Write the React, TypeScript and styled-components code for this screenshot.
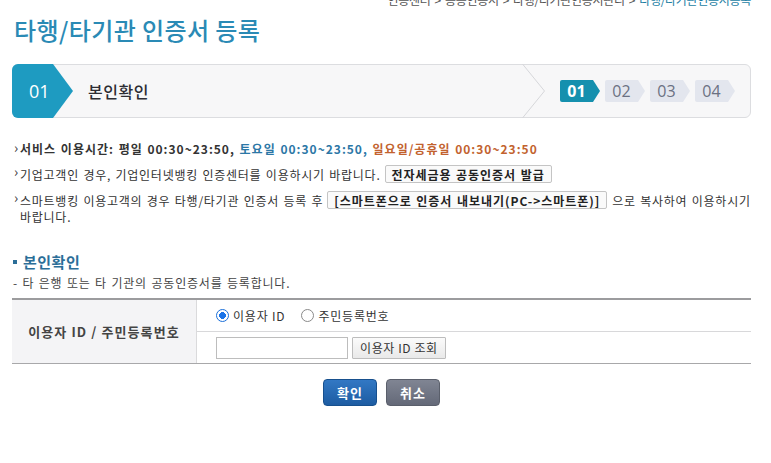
import React from 'react'
import styled, { createGlobalStyle } from 'styled-components'

const GlobalStyle = createGlobalStyle`
    html, body {
        margin: 0;
        padding: 0;
        background: #ffffff;
        overflow: hidden;
    }
    body {
        font-family: "Noto Sans CJK KR", "Noto Sans", sans-serif;
        color: #333333;
        font-size: 12px;
    }
`

const Page = styled.div`
    width: 739px;
    padding: 0 20px 0 12px;
`

const Breadcrumb = styled.div`
    display: flex;
    justify-content: flex-end;
    gap: 4px;
    margin-top: -7px;
    height: 14px;
    font-size: 12px;
    line-height: 14px;
    color: #555555;
    letter-spacing: -0.3px;
`

const Crumb = styled.span<{ $current?: boolean }>`
    color: ${({ $current }) => ($current ? '#1b7ea3' : '#555555')};
`

const Title = styled.h1`
    margin: 8px 0 0 2px;
    font-size: 24px;
    font-weight: 500;
    line-height: 30px;
    color: #2a8ab5;
    letter-spacing: 0.4px;
`

const StepBar = styled.div`
    display: flex;
    align-items: stretch;
    height: 54px;
    margin-top: 19px;
    border: 1px solid #dcdde0;
    border-radius: 6px;
    background: #f7f7f8;
    box-sizing: border-box;
    overflow: visible;
`

const StepBadge = styled.div`
    width: 72px;
    margin: -1px 0 -1px -1px;
    background: #1e9bc1;
    border-radius: 6px 0 0 6px;
    clip-path: polygon(0 0, 41px 0, 61px 50%, 41px 100%, 0 100%);
    color: #ffffff;
    font-family: "Open Sans", "Noto Sans", sans-serif;
    font-size: 18px;
    display: flex;
    align-items: center;
    padding-left: 17px;
    box-sizing: border-box;
`

const StepTitle = styled.div`
    flex: 1;
    display: flex;
    align-items: center;
    padding-left: 4px;
    font-size: 16px;
    font-weight: 500;
    color: #2d2d33;
    letter-spacing: 0.5px;
`

const Chevron = styled.svg`
    width: 24px;
    height: 54px;
    margin-top: -1px;
    flex: none;
`

const Pills = styled.div`
    display: flex;
    align-items: center;
    gap: 5px;
    padding: 0 15px 0 14px;
`

const Pill = styled.div<{ $active?: boolean }>`
    width: 40px;
    height: 22px;
    background: ${({ $active }) => ($active ? '#1590ae' : '#e3e6ee')};
    color: ${({ $active }) => ($active ? '#ffffff' : '#6b7182')};
    font-weight: ${({ $active }) => ($active ? 700 : 400)};
    clip-path: polygon(0 0, 33px 0, 40px 50%, 33px 100%, 0 100%);
    border-radius: 2px 0 0 2px;
    font-family: "Open Sans", "Noto Sans", sans-serif;
    font-size: 16px;
    line-height: 22px;
    padding-right: 7px;
    box-sizing: border-box;
    text-align: center;
`

const Notices = styled.ul`
    list-style: none;
    margin: 23px 0 0 0;
    padding: 0;
`

const Notice = styled.li`
    position: relative;
    padding-left: 8px;
    margin-bottom: 8px;
    line-height: 16px;
    font-size: 12px;
    color: #333333;
    letter-spacing: 0.75px;
    word-spacing: 1px;
    &::before {
        content: '›';
        position: absolute;
        left: 2px;
        top: -2px;
        font-size: 14px;
        font-weight: 400;
        color: #333333;
    }
`

const Line = styled.span`
    white-space: nowrap;
`

const Strong = styled.b<{ $tone?: 'blue' | 'orange' }>`
    font-weight: 700;
    letter-spacing: 1px;
    color: ${({ $tone }) =>
        $tone === 'blue' ? '#2c77a6' : $tone === 'orange' ? '#c2622e' : '#333333'};
`

const Tag = styled.span`
    display: inline-block;
    margin: 0 5px 0 4px;
    padding: 0 6px;
    height: 18px;
    line-height: 17px;
    border: 1px solid #c4c4c4;
    border-radius: 2px;
    background: #fafafa;
    font-weight: 700;
    color: #222222;
    box-sizing: border-box;
    letter-spacing: 0.95px;
`

const SectionTitle = styled.h2`
    display: flex;
    align-items: center;
    gap: 6px;
    margin: 27px 0 0 1px;
    font-size: 15px;
    line-height: 20px;
    font-weight: 700;
    color: #2b6e98;
    letter-spacing: 0.5px;
    &::before {
        content: '';
        width: 4px;
        height: 4px;
        background: #2b6e98;
    }
`

const SectionDesc = styled.p`
    margin: 2px 0 0 1px;
    font-size: 12px;
    line-height: 18px;
    color: #444444;
    letter-spacing: 0.8px;
    word-spacing: 1px;
`

const Table = styled.div`
    display: grid;
    grid-template-columns: 185px 1fr;
    margin-top: 6px;
    border-top: 2px solid #9c9c9e;
    border-bottom: 1px solid #a8a8aa;
`

const HeadCell = styled.div`
    display: flex;
    align-items: center;
    justify-content: center;
    background: #f4f4f6;
    border-right: 1px solid #dadadc;
    font-size: 13px;
    font-weight: 700;
    color: #444444;
    letter-spacing: 1.1px;
`

const Rows = styled.div`
    display: flex;
    flex-direction: column;
`

const Row = styled.div<{ $divider?: boolean }>`
    display: flex;
    align-items: center;
    height: 31px;
    padding-left: 19px;
    border-bottom: ${({ $divider }) => ($divider ? '1px solid #d8d8da' : 'none')};
    gap: 4px;
`

const RadioLabel = styled.label`
    display: flex;
    align-items: center;
    gap: 4px;
    margin-right: 12px;
    font-size: 12px;
    color: #333333;
    letter-spacing: 0.8px;
`

const Radio = styled.input`
    appearance: none;
    margin: 0;
    width: 13px;
    height: 13px;
    border-radius: 50%;
    border: 1px solid #8a8a8a;
    background: #ffffff;
    box-sizing: border-box;
    &:checked {
        border: 1px solid #1a6fd9;
        background: radial-gradient(circle, #1a73e8 0 3.2px, #ffffff 3.6px);
    }
`

const TextInput = styled.input`
    width: 132px;
    height: 22px;
    margin: 0;
    border: 1px solid #bdbdbd;
    box-sizing: border-box;
`

const GrayButton = styled.button`
    height: 22px;
    padding: 0 7px;
    border: 1px solid #bdbdbd;
    border-radius: 1px;
    background: linear-gradient(#fbfbfb, #e9e9e9);
    font-family: inherit;
    font-size: 12px;
    color: #333333;
    letter-spacing: 0.6px;
`

const Actions = styled.div`
    display: flex;
    justify-content: center;
    gap: 9px;
    margin-top: 15px;
`

const ActionButton = styled.button<{ $primary?: boolean }>`
    width: 54px;
    height: 27px;
    border-radius: 4px;
    border: 1px solid ${({ $primary }) => ($primary ? '#17508e' : '#5a5f6b')};
    background: ${({ $primary }) =>
        $primary ? 'linear-gradient(#3278c4, #1d5ca2)' : 'linear-gradient(#808593, #646978)'};
    color: #ffffff;
    font-family: inherit;
    font-size: 13px;
    font-weight: 700;
    letter-spacing: 1px;
`

export default function App() {
    return (
        <Page>
            <GlobalStyle />
            <Breadcrumb>
                <Crumb>인증센터</Crumb>&gt;
                <Crumb>공동인증서</Crumb>&gt;
                <Crumb>타행/타기관인증서관리</Crumb>&gt;
                <Crumb $current>타행/타기관인증서등록</Crumb>
            </Breadcrumb>
            <Title>타행/타기관 인증서 등록</Title>

            <StepBar>
                <StepBadge>01</StepBadge>
                <StepTitle>본인확인</StepTitle>
                <Chevron viewBox="0 0 24 54">
                    <polyline points="0.5,0 22.5,27 0.5,54" fill="none" stroke="#d6d7da" strokeWidth="1" />
                </Chevron>
                <Pills>
                    <Pill $active>01</Pill>
                    <Pill>02</Pill>
                    <Pill>03</Pill>
                    <Pill>04</Pill>
                </Pills>
            </StepBar>

            <Notices>
                <Notice>
                    <Strong>서비스 이용시간: 평일 00:30~23:50, </Strong>
                    <Strong $tone="blue">토요일 00:30~23:50, </Strong>
                    <Strong $tone="orange">일요일/공휴일 00:30~23:50</Strong>
                </Notice>
                <Notice>
                    기업고객인 경우, 기업인터넷뱅킹 인증센터를 이용하시기 바랍니다.
                    <Tag>전자세금용 공동인증서 발급</Tag>
                </Notice>
                <Notice>
                    <Line>
                        스마트뱅킹 이용고객의 경우 타행/타기관 인증서 등록 후
                        <Tag>[스마트폰으로 인증서 내보내기(PC-&gt;스마트폰)]</Tag>
                        으로 복사하여 이용하시기
                    </Line>
                    <br />
                    바랍니다.
                </Notice>
            </Notices>

            <SectionTitle>본인확인</SectionTitle>
            <SectionDesc>- 타 은행 또는 타 기관의 공동인증서를 등록합니다.</SectionDesc>

            <Table>
                <HeadCell>이용자 ID / 주민등록번호</HeadCell>
                <Rows>
                    <Row $divider>
                        <RadioLabel>
                            <Radio type="radio" name="idType" defaultChecked />
                            이용자 ID
                        </RadioLabel>
                        <RadioLabel>
                            <Radio type="radio" name="idType" />
                            주민등록번호
                        </RadioLabel>
                    </Row>
                    <Row>
                        <TextInput type="text" />
                        <GrayButton>이용자 ID 조회</GrayButton>
                    </Row>
                </Rows>
            </Table>

            <Actions>
                <ActionButton $primary>확인</ActionButton>
                <ActionButton>취소</ActionButton>
            </Actions>
        </Page>
    )
}
